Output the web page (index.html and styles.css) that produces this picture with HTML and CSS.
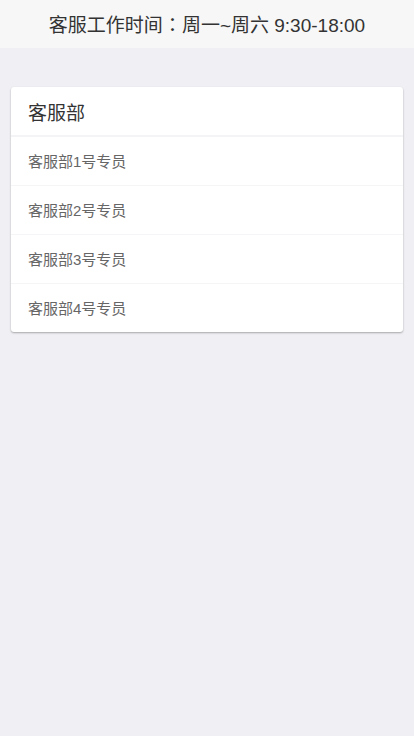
FILE: index.html
```html
<!DOCTYPE html>
<html lang="zh-CN">
<head>
<meta charset="utf-8">
<meta name="viewport" content="width=device-width, initial-scale=1">
<title>客服</title>
<link rel="stylesheet" href="styles.css">
</head>
<body>
<header class="topbar">客服工作时间<span class="colon">：</span>周一~周六 9:30-18:00</header>
<main class="content">
  <section class="card">
    <div class="card-title">客服部</div>
    <ul class="list">
      <li class="item">客服部1号专员</li>
      <li class="item">客服部2号专员</li>
      <li class="item">客服部3号专员</li>
      <li class="item">客服部4号专员</li>
    </ul>
  </section>
</main>
</body>
</html>
```
FILE: styles.css
```css
* { box-sizing: border-box; }
html, body { margin: 0; padding: 0; }
body {
  background: #efeff4;
  font-family: "Liberation Sans", "Noto Sans CJK SC", sans-serif;
  min-height: 736px;
}
.topbar {
  height: 48px;
  padding-bottom: 2px;
  background: #f7f7f7;
  color: #333;
  font-size: 19px;
  display: flex;
  align-items: center;
  justify-content: center;
}
.colon {
  font-family: "Noto Sans CJK TC", sans-serif;
}
.content {
  padding: 39px 11px 0;
}
.card {
  background: #fff;
  border-radius: 3px;
  box-shadow: 0 1px 2px rgba(0,0,0,0.3);
  overflow: hidden;
}
.card-title {
  height: 50px;
  padding-left: 17px;
  padding-top: 1px;
  display: flex;
  align-items: center;
  font-size: 19px;
  color: #333;
  border-bottom: 2px solid #f4f4f6;
}
.list {
  list-style: none;
  margin: 0;
  padding: 0;
}
.item {
  height: 49px;
  padding-left: 17px;
  padding-bottom: 2px;
  display: flex;
  align-items: center;
  font-size: 15px;
  color: #666;
  border-bottom: 1px solid #f5f5f7;
}
.item:last-child { border-bottom: none; height: 48px; }
```
